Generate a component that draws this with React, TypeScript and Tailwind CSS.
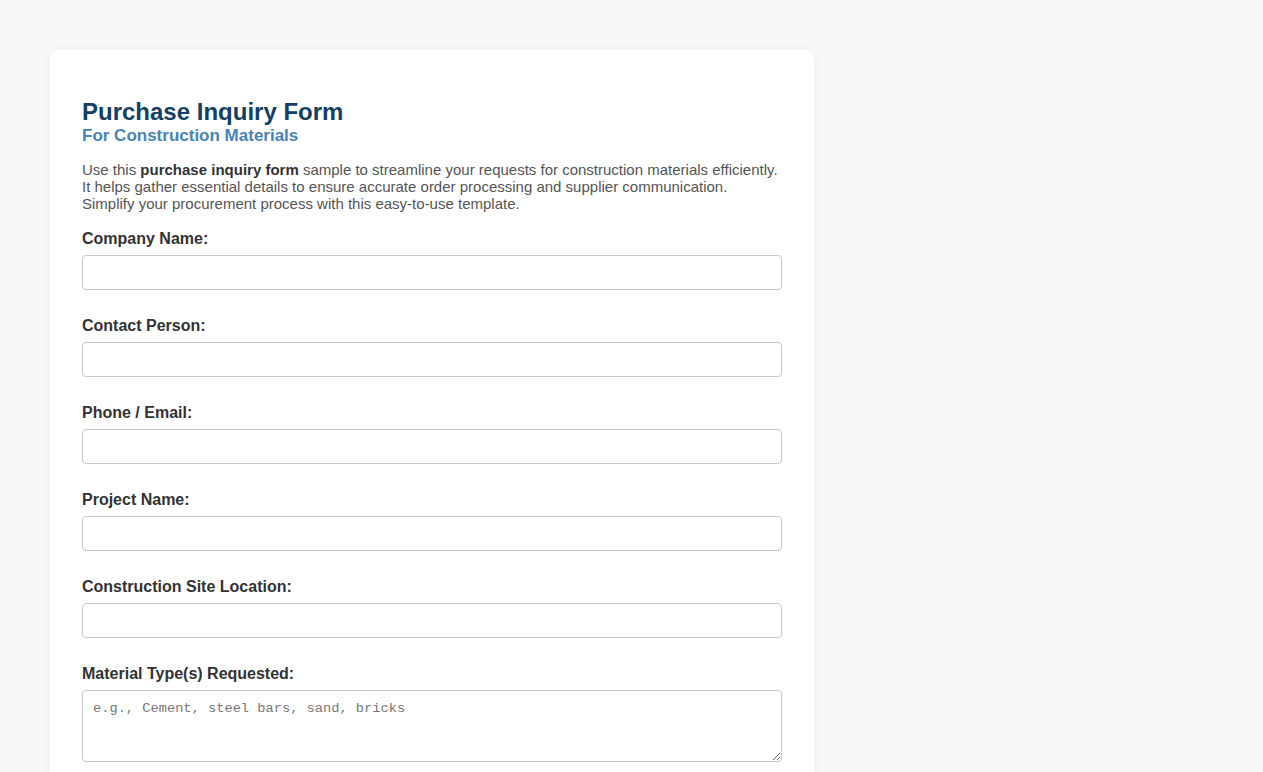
import React from 'react';

const FIELDS = ['Company Name:', 'Contact Person:', 'Phone / Email:', 'Project Name:', 'Construction Site Location:'];

export default function App() {
  return (
    <div className="min-h-screen bg-[#f7f8fa] p-[50px] font-['Liberation_Sans',Arial,sans-serif]">
      <div className="w-[764px] bg-white rounded-lg shadow-[0_0_10px_rgba(0,0,0,0.05)] px-8 pt-12 pb-8">
        <h1 className="text-[24px] leading-[28px] font-bold text-[#123f62]">Purchase Inquiry Form</h1>
        <h2 className="text-[17px] leading-[20px] font-bold text-[#4a84b4]">For Construction Materials</h2>

        {/* Intro */}
        <p className="mt-[15px] text-[15px] leading-[17px] text-[#555]">
          Use this <strong className="text-[#333]">purchase inquiry form</strong> sample to streamline your requests for construction materials efficiently.
          <br />
          It helps gather essential details to ensure accurate order processing and supplier communication.
          <br />
          Simplify your procurement process with this easy-to-use template.
        </p>

        <div className="mt-[18px]">
          {FIELDS.map(f => (
            <div key={f} className="mb-[27px]">
              <label className="block text-[16px] leading-[18px] font-bold text-[#333] mb-[7px]">{f}</label>
              <input type="text" className="block w-full h-[35px] border border-[#c8c8c8] rounded-[4px] px-2.5 bg-white" />
            </div>
          ))}
          <div>
            <label className="block text-[16px] leading-[18px] font-bold text-[#333] mb-[7px]">Material Type(s) Requested:</label>
            <textarea
              placeholder="e.g., Cement, steel bars, sand, bricks"
              className="block w-full h-[72px] border border-[#c8c8c8] rounded-[4px] px-2.5 py-2 text-[13.7px] font-['Liberation_Mono',monospace] placeholder:text-[#777]"
            />
          </div>
        </div>
      </div>
    </div>
  );
}
